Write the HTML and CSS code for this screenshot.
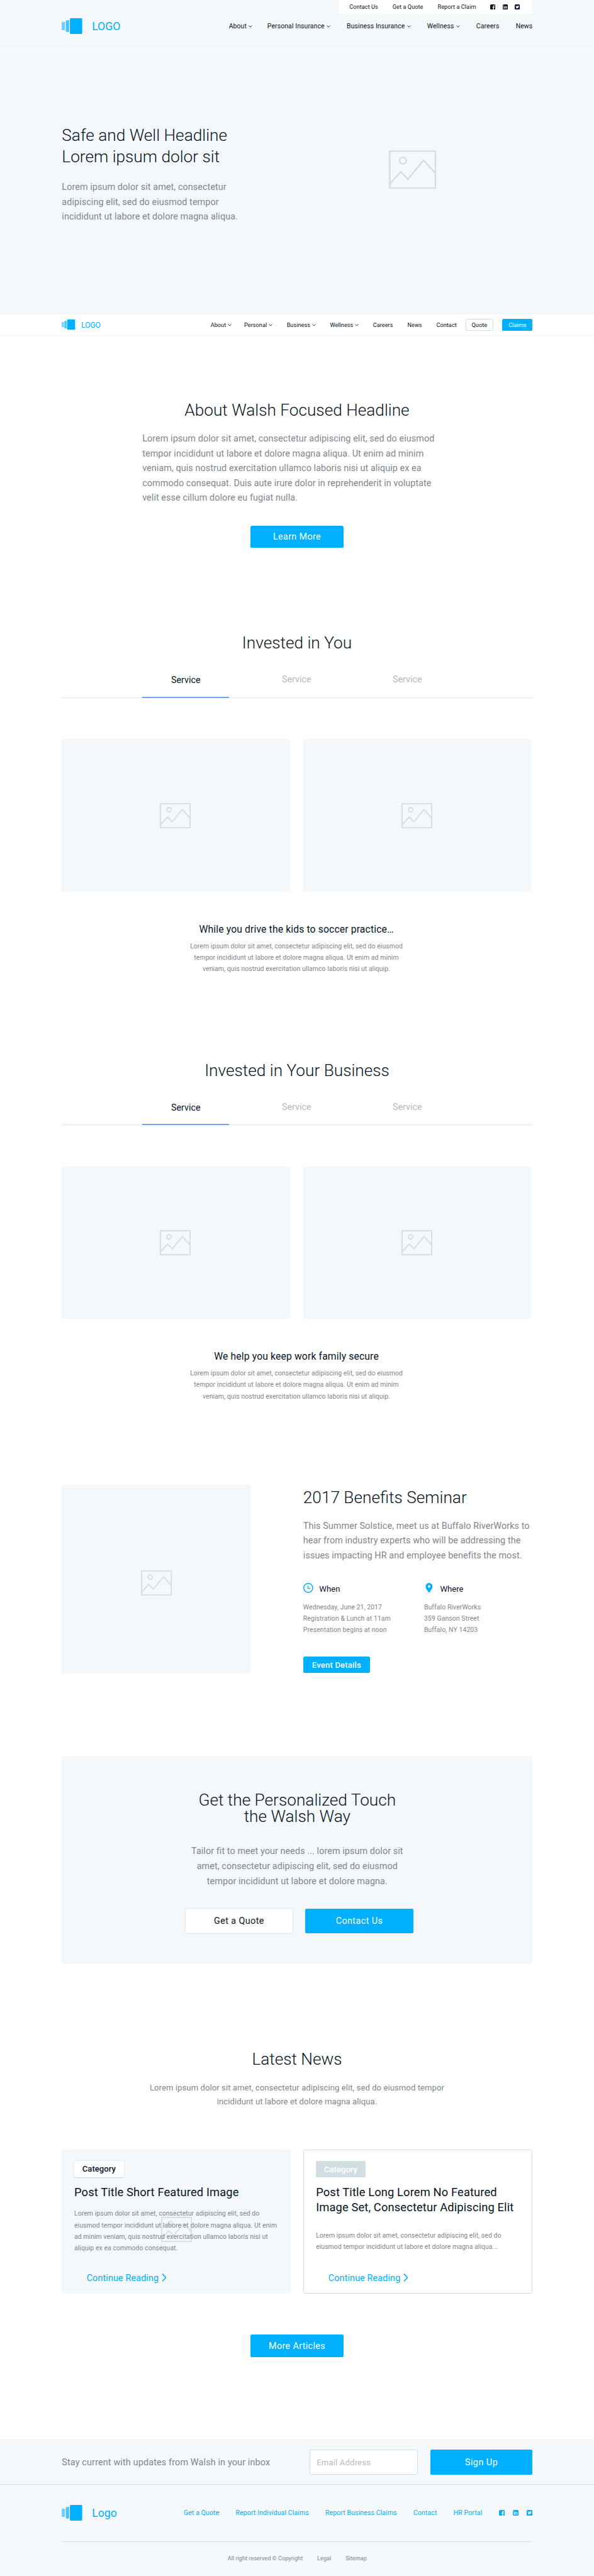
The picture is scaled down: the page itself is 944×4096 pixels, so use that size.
FILE: index.html
```html
<!DOCTYPE html>
<html lang="en">
<head>
<meta charset="utf-8">
<title>Walsh</title>
<link rel="stylesheet" href="styles.css">
</head>
<body>
<svg class="defs" aria-hidden="true">
  <symbol id="mark" viewBox="0 0 50 38">
    <path d="M2.500 9H8v20H2.500A2.500 2.500 0 0 1 0 26.500v-15A2.500 2.500 0 0 1 2.500 9z" fill="#70d1ff"/>
    <path d="M12.500 5H18v28h-5.500a2.500 2.500 0 0 1-2.500-2.500v-23A2.500 2.500 0 0 1 12.500 5z" fill="#47c4ff"/>
    <rect x="20" width="30" height="38" rx="2.500" fill="#00b0ff"/>
  </symbol>
  <symbol id="chev" viewBox="0 0 9 6">
    <path d="M.7.8 4.500 4.800 8.300.8" fill="none" stroke="currentColor" stroke-width="1.300"/>
  </symbol>
  <symbol id="next" viewBox="0 0 12 20">
    <path d="M1.500 1 10 10 1.500 19" fill="none" stroke="currentColor" stroke-width="2.400"/>
  </symbol>
  <symbol id="photo" viewBox="0 0 115 94">
    <g fill="none" stroke="#d3dee2">
      <rect x="2" y="2" width="111" height="90" rx="1"/>
      <circle cx="34" cy="25" r="8"/>
      <path d="M2 82 29 52l17 18 38-46 29 32"/>
    </g>
  </symbol>
  <symbol id="fb" viewBox="0 0 14 14">
    <path fill-rule="evenodd" d="M3 0h8a3 3 0 0 1 3 3v8a3 3 0 0 1-3 3h-1V8.800h1.700l.3-2H10V5.500c0-.6.300-1 1-1h1.100V2.700L10.600 2.600C8.900 2.600 7.900 3.600 7.900 5.300v1.500H6.200v2h1.700V14H3a3 3 0 0 1-3-3V3a3 3 0 0 1 3-3z" fill="currentColor"/>
  </symbol>
  <symbol id="li" viewBox="0 0 14 14">
    <path fill-rule="evenodd" d="M3 0h8a3 3 0 0 1 3 3v8a3 3 0 0 1-3 3H3a3 3 0 0 1-3-3V3a3 3 0 0 1 3-3zM2.200 5.400v6h1.900v-6zM3.100 2.500a1.050 1.050 0 1 0 0 2.100 1.050 1.050 0 0 0 0-2.100zM5.300 5.400v6h1.900V8.200c0-1.700 2.200-1.800 2.200 0v3.200h1.900V7.600c0-2.900-3.200-2.800-4.100-1.400v-.8z" fill="currentColor"/>
  </symbol>
  <symbol id="tw" viewBox="0 0 14 14">
    <path fill-rule="evenodd" d="M3 0h8a3 3 0 0 1 3 3v8a3 3 0 0 1-3 3H3a3 3 0 0 1-3-3V3a3 3 0 0 1 3-3zM11.800 4.100l-1.100.3c.4-.2.700-.6.800-1l-1.200.4c-1.300-1.300-3.500-.3-3.100 1.600C5.500 5.300 4.100 4.500 3 3.300c-.5 1-.3 2 .6 2.700L2.700 5.700c0 .9.600 1.700 1.600 2l-.9.100c.3.800 1 1.300 1.800 1.300-.8.600-1.700.9-2.800.8 4.200 2.500 8.700-.2 8.500-4.700z" fill="currentColor"/>
  </symbol>
</svg>

<header class="header">
  <div class="wrap">
    <div class="topbar">
      <a>Contact Us</a><a>Get a Quote</a><a>Report a Claim</a>
      <span class="social"><svg><use href="#fb"/></svg><svg><use href="#li"/></svg><svg><use href="#tw"/></svg></span>
    </div>
    <div class="bar">
      <div class="logo"><svg class="mark"><use href="#mark"/></svg><span>LOGO</span></div>
      <nav class="nav">
        <a class="first">About<svg class="chev"><use href="#chev"/></svg></a>
        <a>Personal Insurance<svg class="chev"><use href="#chev"/></svg></a>
        <a>Business Insurance<svg class="chev"><use href="#chev"/></svg></a>
        <a>Wellness<svg class="chev"><use href="#chev"/></svg></a>
        <a>Careers</a>
        <a>News</a>
      </nav>
    </div>
  </div>
</header>

<section class="hero">
  <div class="wrap hero-row">
    <div class="hero-text">
      <h1>Safe and Well Headline<br>Lorem ipsum dolor sit</h1>
      <p class="lead">Lorem ipsum dolor sit amet, consectetur<br>adipiscing elit, sed do eiusmod tempor<br>incididunt ut labore et dolore magna aliqua.</p>
    </div>
    <svg class="hero-photo"><use href="#photo"/></svg>
  </div>
</section>

<div class="sticky">
  <div class="wrap sticky-row">
    <div class="logo logo-small"><svg class="mark"><use href="#mark"/></svg><span>LOGO</span></div>
    <nav class="nav nav-small">
      <a class="first">About<svg class="chev"><use href="#chev"/></svg></a>
      <a>Personal<svg class="chev"><use href="#chev"/></svg></a>
      <a>Business<svg class="chev"><use href="#chev"/></svg></a>
      <a>Wellness<svg class="chev"><use href="#chev"/></svg></a>
      <a>Careers</a>
      <a>News</a>
      <a>Contact</a>
    </nav>
    <a class="pill pill-line">Quote</a>
    <a class="pill pill-fill">Claims</a>
  </div>
</div>

<section class="about">
  <h2>About Walsh Focused Headline</h2>
  <p class="lead">Lorem ipsum dolor sit amet, consectetur adipiscing elit, sed do eiusmod<br>tempor incididunt ut labore et dolore magna aliqua. Ut enim ad minim<br>veniam, quis nostrud exercitation ullamco laboris nisi ut aliquip ex ea<br>commodo consequat. Duis aute irure dolor in reprehenderit in voluptate<br>velit esse cillum dolore eu fugiat nulla.</p>
  <a class="btn">Learn More</a>
</section>

<section class="invested">
  <h2>Invested in You</h2>
  <div class="tabs wrap"><a class="tab active">Service</a><a class="tab">Service</a><a class="tab">Service</a></div>
  <div class="tiles">
    <div class="tile"><svg><use href="#photo"/></svg></div>
    <div class="tile"><svg><use href="#photo"/></svg></div>
  </div>
  <div class="caption">
    <h3>While you drive the kids to soccer practice…</h3>
    <p>Lorem ipsum dolor sit amet, consectetur adipiscing elit, sed do eiusmod<br>tempor incididunt ut labore et dolore magna aliqua. Ut enim ad minim<br>veniam, quis nostrud exercitation ullamco laboris nisi ut aliquip.</p>
  </div>
</section>

<section class="invested">
  <h2>Invested in Your Business</h2>
  <div class="tabs wrap"><a class="tab active">Service</a><a class="tab">Service</a><a class="tab">Service</a></div>
  <div class="tiles">
    <div class="tile"><svg><use href="#photo"/></svg></div>
    <div class="tile"><svg><use href="#photo"/></svg></div>
  </div>
  <div class="caption">
    <h3>We help you keep work family secure</h3>
    <p>Lorem ipsum dolor sit amet, consectetur adipiscing elit, sed do eiusmod<br>tempor incididunt ut labore et dolore magna aliqua. Ut enim ad minim<br>veniam, quis nostrud exercitation ullamco laboris nisi ut aliquip.</p>
  </div>
</section>

<section class="seminar wrap">
  <div class="seminar-photo"><svg><use href="#photo"/></svg></div>
  <div class="seminar-info">
    <h2>2017 Benefits Seminar</h2>
    <p class="lead">This Summer Solstice, meet us at Buffalo RiverWorks to<br>hear from industry experts who will be addressing the<br>issues impacting HR and employee benefits the most.</p>
    <div class="facts">
      <div class="fact">
        <div class="fact-head">
          <svg viewBox="0 0 24 24"><circle cx="12" cy="12" r="10.900" fill="none" stroke="#00b0ff" stroke-width="2.200"/><path d="M11.200 6.500v6.600h6" fill="none" stroke="#00b0ff" stroke-width="1.900"/></svg>
          <span>When</span>
        </div>
        <p>Wednesday, June 21, 2017<br>Registration &amp; Lunch at 11am<br>Presentation begins at noon</p>
      </div>
      <div class="fact">
        <div class="fact-head">
          <svg viewBox="0 0 24 24"><path fill-rule="evenodd" d="M12 0a8.300 8.300 0 0 1 8.300 8.300C20.300 14 15.500 18.500 12 24 8.500 18.500 3.700 14 3.700 8.300A8.300 8.300 0 0 1 12 0zm0 5.200a3.200 3.200 0 1 0 0 6.400 3.200 3.200 0 0 0 0-6.400z" fill="#00b0ff"/></svg>
          <span>Where</span>
        </div>
        <p>Buffalo RiverWorks<br>359 Ganson Street<br>Buffalo, NY 14203</p>
      </div>
    </div>
    <a class="event">Event Details</a>
  </div>
</section>

<section class="cta wrap">
  <h2>Get the Personalized Touch<br>the Walsh Way</h2>
  <p class="lead">Tailor fit to meet your needs ... lorem ipsum dolor sit<br>amet, consectetur adipiscing elit, sed do eiusmod<br>tempor incididunt ut labore et dolore magna.</p>
  <div class="cta-btns"><a class="cta-btn cta-line">Get a Quote</a><a class="cta-btn cta-fill">Contact Us</a></div>
</section>

<section class="news">
  <h2>Latest News</h2>
  <p class="intro">Lorem ipsum dolor sit amet, consectetur adipiscing elit, sed do eiusmod tempor<br>incididunt ut labore et dolore magna aliqua.</p>
  <div class="cards wrap">
    <article class="card card-photo">
      <svg class="card-bg"><use href="#photo"/></svg>
      <span class="tag">Category</span>
      <h3>Post Title Short Featured Image</h3>
      <p>Lorem ipsum dolor sit amet, consectetur adipiscing elit, sed do<br>eiusmod tempor incididunt ut labore et dolore magna aliqua. Ut enim<br>ad minim veniam, quis nostrud exercitation ullamco laboris nisi ut<br>aliquip ex ea commodo consequat.</p>
      <a class="more">Continue Reading<svg><use href="#next"/></svg></a>
    </article>
    <article class="card card-plain">
      <span class="tag">Category</span>
      <h3>Post Title Long Lorem No Featured<br>Image Set, Consectetur Adipiscing Elit</h3>
      <p>Lorem ipsum dolor sit amet, consectetur adipiscing elit, sed do<br>eiusmod tempor incididunt ut labore et dolore magna aliqua...</p>
      <a class="more">Continue Reading<svg><use href="#next"/></svg></a>
    </article>
  </div>
  <a class="btn">More Articles</a>
</section>

<section class="signup">
  <div class="wrap signup-row">
    <span class="signup-text">Stay current with updates from Walsh in your inbox</span>
    <span class="field">Email Address</span>
    <a class="submit">Sign Up</a>
  </div>
</section>

<footer class="footer">
  <div class="wrap foot-row">
    <div class="logo"><svg class="mark"><use href="#mark"/></svg><span>Logo</span></div>
    <nav class="foot-nav">
      <a>Get a Quote</a><a>Report Individual Claims</a><a>Report Business Claims</a><a>Contact</a><a>HR Portal</a>
      <span class="social"><svg><use href="#fb"/></svg><svg><use href="#li"/></svg><svg><use href="#tw"/></svg></span>
    </nav>
  </div>
  <div class="wrap legal"><span>All right reserved © Copyright</span><span>Legal</span><span>Sitemap</span></div>
</footer>
</body>
</html>
```
FILE: styles.css
```css
/* 1rem = 10 design pixels of the 1440-wide layout */
html { font-size: 6.5556px; }
* { box-sizing: border-box; }
body {
  margin: 0;
  min-height: 4096px;
  display: flex;
  flex-direction: column;
  font-family: Roboto, sans-serif;
  font-size: 1.6rem;
  color: #071425;
  background: #fff;
  white-space: nowrap;
  overflow-x: hidden;
}
h1, h2, h3, p { margin: 0; }
svg { display: block; flex: none; }
.defs { position: absolute; width: 0; height: 0; }
.wrap { margin-left: 15rem; margin-right: 14.9rem; }

h1, h2 { font-size: 4rem; line-height: 5.2rem; font-weight: 300; }
h2 { text-align: center; }
.lead { font-size: 2.2rem; line-height: 3.6rem; letter-spacing: .01rem; color: #80868e; }

/* header */
.header { background: #f4f8fb; height: 12.1rem; border-bottom: .2rem solid #fff; }
.topbar {
  display: flex; align-items: center; gap: 3.5rem;
  width: 47rem; height: 3.3rem; margin-left: auto; padding-left: 2.6rem;
  background: #fff; font-size: 1.4rem; letter-spacing: .01rem;
}
.social { display: flex; gap: 1.7rem; }
.social svg { width: 1.25rem; height: 1.25rem; }
.bar { display: flex; align-items: center; justify-content: space-between; height: 6.2rem; }
.logo { display: flex; align-items: center; gap: 2.3rem; color: #00b0ff; font-size: 2.7rem; }
.mark { width: 5rem; height: 3.8rem; }
.nav { display: flex; gap: 4rem; letter-spacing: .014rem; }
.nav a { display: flex; align-items: center; gap: .5rem; }
.nav .first { margin-right: -.4rem; }
.chev { width: .9rem; height: .6rem; }

/* hero */
.hero { height: 64.1rem; padding-top: 18.1rem; background: #f4f8fb; }
.hero-row { display: flex; }
.hero-text { width: 79.3rem; }
.hero-text .lead { margin-top: 3.05rem; }
.hero-photo { width: 11.5rem; height: 9.4rem; margin-top: 6.2rem; stroke-width: 3.6; }

/* compact bar */
.sticky { height: 5.2rem; border-bottom: .2rem solid #f4f8fb; padding-top: .2rem; }
.sticky-row { display: flex; align-items: center; height: 4.8rem; font-size: 1.4rem; }
.logo-small { gap: 1.4rem; font-size: 1.84rem; margin-right: auto; }
.logo-small .mark { width: 3.3rem; height: 2.5rem; }
.nav-small { gap: 3.5rem; margin-right: 2.1rem; letter-spacing: .005rem; }
.nav-small a { gap: .4rem; }
.pill { display: flex; align-items: center; justify-content: center; height: 3rem; border-radius: .4rem; }
.pill-line { width: 6.8rem; border: .1rem solid #d3dee2; margin-right: 2.2rem; }
.pill-fill { width: 7.3rem; background: #00b0ff; color: #fff; }

/* about */
.about { padding-top: 15.43rem; }
.about .lead { margin: 2.62rem 0 0 34.5rem; }
.btn {
  display: flex; align-items: center; justify-content: center;
  width: 22.5rem; height: 5.4rem; margin: 4.85rem auto 0;
  border-radius: .4rem; background: #00b0ff; color: #fff;
  font-size: 2.2rem; letter-spacing: .048rem;
}

/* tabbed galleries */
.invested { padding-top: 20.43rem; }
.tabs {
  display: flex; gap: 5.75rem; height: 10.77rem;
  padding: 3.8rem 0 0 19.5rem; border-bottom: 1px solid #e1e6f0;
}
.tab {
  width: 21.1rem; height: 6.97rem; padding-top: .82rem; text-align: center;
  font-size: 2.2rem; line-height: 3.6rem; color: #b7babf;
}
.tab.active { color: #071425; border-bottom: 2px solid #6ea3ff; padding-top: .92rem; }
.tiles { display: flex; gap: 3rem; margin: 10rem 0 0 14.8rem; }
.tile {
  display: flex; align-items: center; justify-content: center;
  width: 55.5rem; height: 37rem; border-radius: .3rem; background: #f4f8fb;
}
.tile svg, .seminar-photo svg, .card-bg { width: 7.5rem; height: 6.1rem; stroke-width: 4.2; }
.caption { width: 143.7rem; margin-top: 7.28rem; text-align: center; }
.caption h3 { font-size: 2.4rem; line-height: 3.6rem; font-weight: 400; letter-spacing: .02rem; }
.caption p { margin-top: .97rem; line-height: 2.8rem; letter-spacing: .008rem; color: #80868e; }

/* seminar */
.seminar { display: flex; margin-top: 19.95rem; }
.seminar-photo {
  display: flex; align-items: center; justify-content: center; flex: none;
  width: 45.8rem; height: 45.8rem; padding-top: 2rem; border-radius: .3rem; background: #f4f8fb;
}
.seminar-info { flex: none; width: 55.6rem; margin-left: 12.7rem; padding-top: .43rem; }
.seminar-info h2 { text-align: left; }
.seminar-info .lead { margin-top: 2.62rem; }
.facts { display: flex; margin-top: 4.85rem; }
.fact:first-child { width: 29.3rem; }
.fact-head { display: flex; gap: 1.5rem; height: 2.6rem; font-size: 2rem; line-height: 2.4rem; }
.fact-head svg { width: 2.4rem; height: 2.4rem; }
.fact-head span { padding-top: .22rem; }
.fact p { margin-top: 1.85rem; line-height: 2.8rem; letter-spacing: .012rem; color: #80868e; }
.event {
  display: flex; align-items: center; justify-content: center;
  width: 16.2rem; height: 4rem; margin-top: 4.95rem; border-radius: .4rem;
  background: #00b0ff; color: #fff; font-size: 2rem; font-weight: 500; letter-spacing: .025rem;
}

/* call to action */
.cta {
  height: 50.5rem; margin-top: 20rem; padding-top: 8.6rem;
  border-radius: .5rem; background: #f4f8fb; text-align: center;
}
.cta h2 { line-height: 4rem; }
.cta .lead { margin-top: 4.8rem; }
.cta-btns { display: flex; align-items: center; justify-content: center; gap: 2.9rem; margin-top: 4.7rem; padding-left: .9rem; }
.cta-btn {
  display: flex; align-items: center; justify-content: center;
  width: 26.2rem; height: 6rem; border-radius: .4rem; font-size: 2.2rem; letter-spacing: .06rem;
}
.cta-line { width: 26.3rem; height: 6.2rem; background: #fff; border: .1rem solid #dfe7ea; }
.cta-fill { background: #00b0ff; color: #fff; }

/* news */
.news { padding-top: 20.43rem; }
.intro { margin-top: 2.64rem; font-size: 2rem; line-height: 3.4rem; letter-spacing: .009rem; color: #80868e; text-align: center; }
.cards { display: flex; gap: 3rem; margin-top: 9.83rem; }
.card {
  position: relative; display: flex; flex-direction: column; align-items: flex-start;
  width: 55.55rem; height: 35rem; padding: 2.8rem 0 1.85rem 3rem; border-radius: .5rem;
}
.card-photo { background: #f4f8fb; }
.card-plain { border: 1px solid #d3dee2; padding: 2.7rem 0 1.75rem 2.9rem; }
.card-bg { position: absolute; left: 24.1rem; top: 16.4rem; }
.card h3, .card p { position: relative; }
.tag {
  display: flex; align-items: center; justify-content: center;
  width: 12rem; height: 4rem; border-radius: .4rem; background: #fff;
  font-size: 2rem; font-weight: 500; box-shadow: 0 .1rem .3rem rgba(0, 0, 0, .16);
}
.card-plain .tag { background: #d3dee2; color: #fff; box-shadow: none; }
.card h3 { margin-top: 1.84rem; font-size: 2.8rem; line-height: 3.6rem; font-weight: 400; letter-spacing: .018rem; }
.card p { margin-top: 2.06rem; line-height: 2.8rem; letter-spacing: .008rem; color: #80868e; }
.card-plain p { margin-top: 3.66rem; }
.more {
  display: flex; align-items: center; gap: .7rem; margin: auto 0 0 3rem;
  font-size: 2.2rem; line-height: 3.6rem; letter-spacing: .016rem; color: #00b0ff;
}
.more svg { width: 1.2rem; height: 2rem; margin-top: -.3rem; }
.news .btn { margin-top: 10rem; }

/* sign-up strip */
.signup { height: 11rem; margin-top: 20rem; padding-top: 2.5rem; background: #f4f8fb; border-bottom: 1px solid #d3dee2; }
.signup-row { display: flex; align-items: center; height: 6rem; }
.signup-text { font-size: 2.2rem; letter-spacing: .02rem; color: #80868e; margin-right: auto; }
.field {
  display: flex; align-items: center; width: 26.3rem; height: 6rem; padding-left: 1.6rem; margin-right: 3rem;
  background: #fff; border: 1px solid #d3dee2; border-radius: .4rem;
  font-size: 2rem; letter-spacing: .024rem; color: #b7babf;
}
.submit {
  display: flex; align-items: center; justify-content: center; width: 24.8rem; height: 6rem;
  background: #00b0ff; color: #fff; border-radius: .4rem; font-size: 2.2rem; letter-spacing: .07rem;
}

/* footer */
.footer { background: #f4f8fb; flex: 1 0 22rem; }
.foot-row { display: flex; align-items: center; justify-content: space-between; height: 13.8rem; border-bottom: 1px solid #d3dee2; }
.foot-nav { display: flex; align-items: center; gap: 4rem; color: #00b0ff; letter-spacing: .02rem; }
.foot-nav .social { gap: 2rem; }
.foot-nav .social svg { width: 1.4rem; height: 1.4rem; }
.legal { display: flex; align-items: center; justify-content: center; gap: 3.5rem; height: 7.9rem; font-size: 1.4rem; color: #80868e; }
```
